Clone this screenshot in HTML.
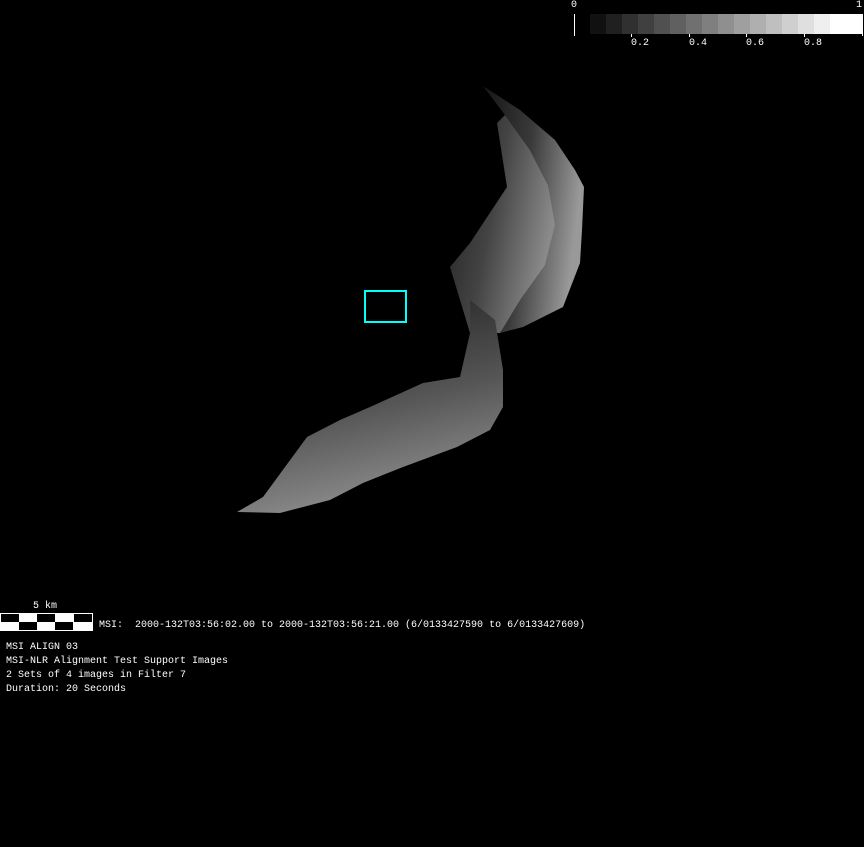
<!DOCTYPE html>
<html><head><style>
html,body{margin:0;padding:0;background:#000;width:864px;height:847px;overflow:hidden}
.t{position:absolute;color:#fff;font-family:"Liberation Mono",monospace;font-size:10px;line-height:14px;white-space:pre}
</style></head><body>
<svg width="864" height="847" style="position:absolute;left:0;top:0">
<defs>
<linearGradient id="g1" x1="0" y1="0" x2="1" y2="0.3">
<stop offset="0" stop-color="#151515"/><stop offset="0.5" stop-color="#3a3a3a"/><stop offset="1" stop-color="#999"/></linearGradient>
<linearGradient id="g2" x1="0" y1="0" x2="0.3" y2="1">
<stop offset="0" stop-color="#1a1a1a"/><stop offset="0.6" stop-color="#555"/><stop offset="1" stop-color="#8a8a8a"/></linearGradient>
<linearGradient id="g3" x1="0" y1="0" x2="1" y2="0.4">
<stop offset="0" stop-color="#1e1e1e"/><stop offset="0.5" stop-color="#444"/><stop offset="1" stop-color="#8a8a8a"/></linearGradient>
</defs>
<polygon fill="url(#g3)" points="505,115 530,150 548,185 556,225 548,265 522,300 500,333 470,333 457,290 450,267 470,243 507,187 497,123"/>
<polygon fill="url(#g1)" points="483,86 520,110 555,140 575,170 584,187 582,230 580,263 563,307 523,327 500,333 520,300 545,265 555,225 548,185 530,150 505,115"/>
<polygon fill="url(#g2)" points="470,300 495,320 503,370 503,407 490,430 457,447 403,467 363,483 330,500 280,513 237,512 263,497 307,437 340,420 370,407 423,383 460,377 470,333"/>
<rect x="365" y="291" width="41" height="31" fill="none" stroke="#0ff" stroke-width="2"/>
<g>
<rect x="590" y="14" width="16" height="20" fill="#111"/><rect x="606" y="14" width="16" height="20" fill="#202020"/><rect x="622" y="14" width="16" height="20" fill="#303030"/><rect x="638" y="14" width="16" height="20" fill="#404040"/><rect x="654" y="14" width="16" height="20" fill="#505050"/><rect x="670" y="14" width="16" height="20" fill="#606060"/><rect x="686" y="14" width="16" height="20" fill="#707070"/><rect x="702" y="14" width="16" height="20" fill="#7f7f7f"/><rect x="718" y="14" width="16" height="20" fill="#8f8f8f"/><rect x="734" y="14" width="16" height="20" fill="#9f9f9f"/><rect x="750" y="14" width="16" height="20" fill="#afafaf"/><rect x="766" y="14" width="16" height="20" fill="#bfbfbf"/><rect x="782" y="14" width="16" height="20" fill="#cfcfcf"/><rect x="798" y="14" width="16" height="20" fill="#dfdfdf"/><rect x="814" y="14" width="16" height="20" fill="#efefef"/><rect x="830" y="14" width="32" height="20" fill="#fff"/>
<rect x="574" y="14" width="1" height="22" fill="#fff"/><rect x="862" y="14" width="1" height="22" fill="#fff"/>
<rect x="631" y="34" width="1" height="3" fill="#fff"/><rect x="689" y="34" width="1" height="3" fill="#fff"/><rect x="746" y="34" width="1" height="3" fill="#fff"/><rect x="804" y="34" width="1" height="3" fill="#fff"/>
</g>
<rect x="0" y="613" width="93" height="18" fill="#fff"/>
<rect x="1" y="614" width="18" height="8" fill="#000"/><rect x="37" y="614" width="18" height="8" fill="#000"/><rect x="74" y="614" width="18" height="8" fill="#000"/>
<rect x="19" y="622" width="18" height="8" fill="#000"/><rect x="55" y="622" width="18" height="8" fill="#000"/>
</svg>
<div class="t" style="left:571px;top:-1px">0</div>
<div class="t" style="left:856px;top:-1px">1</div>
<div class="t" style="left:631px;top:37px">0.2</div>
<div class="t" style="left:689px;top:37px">0.4</div>
<div class="t" style="left:746px;top:37px">0.6</div>
<div class="t" style="left:804px;top:37px">0.8</div>
<div class="t" style="left:33px;top:600px">5 km</div>
<div class="t" style="left:99px;top:619px">MSI:  2000-132T03:56:02.00 to 2000-132T03:56:21.00 (6/0133427590 to 6/0133427609)</div>
<div class="t" style="left:6px;top:641px">MSI ALIGN 03
MSI-NLR Alignment Test Support Images
2 Sets of 4 images in Filter 7
Duration: 20 Seconds</div>
</body></html>
